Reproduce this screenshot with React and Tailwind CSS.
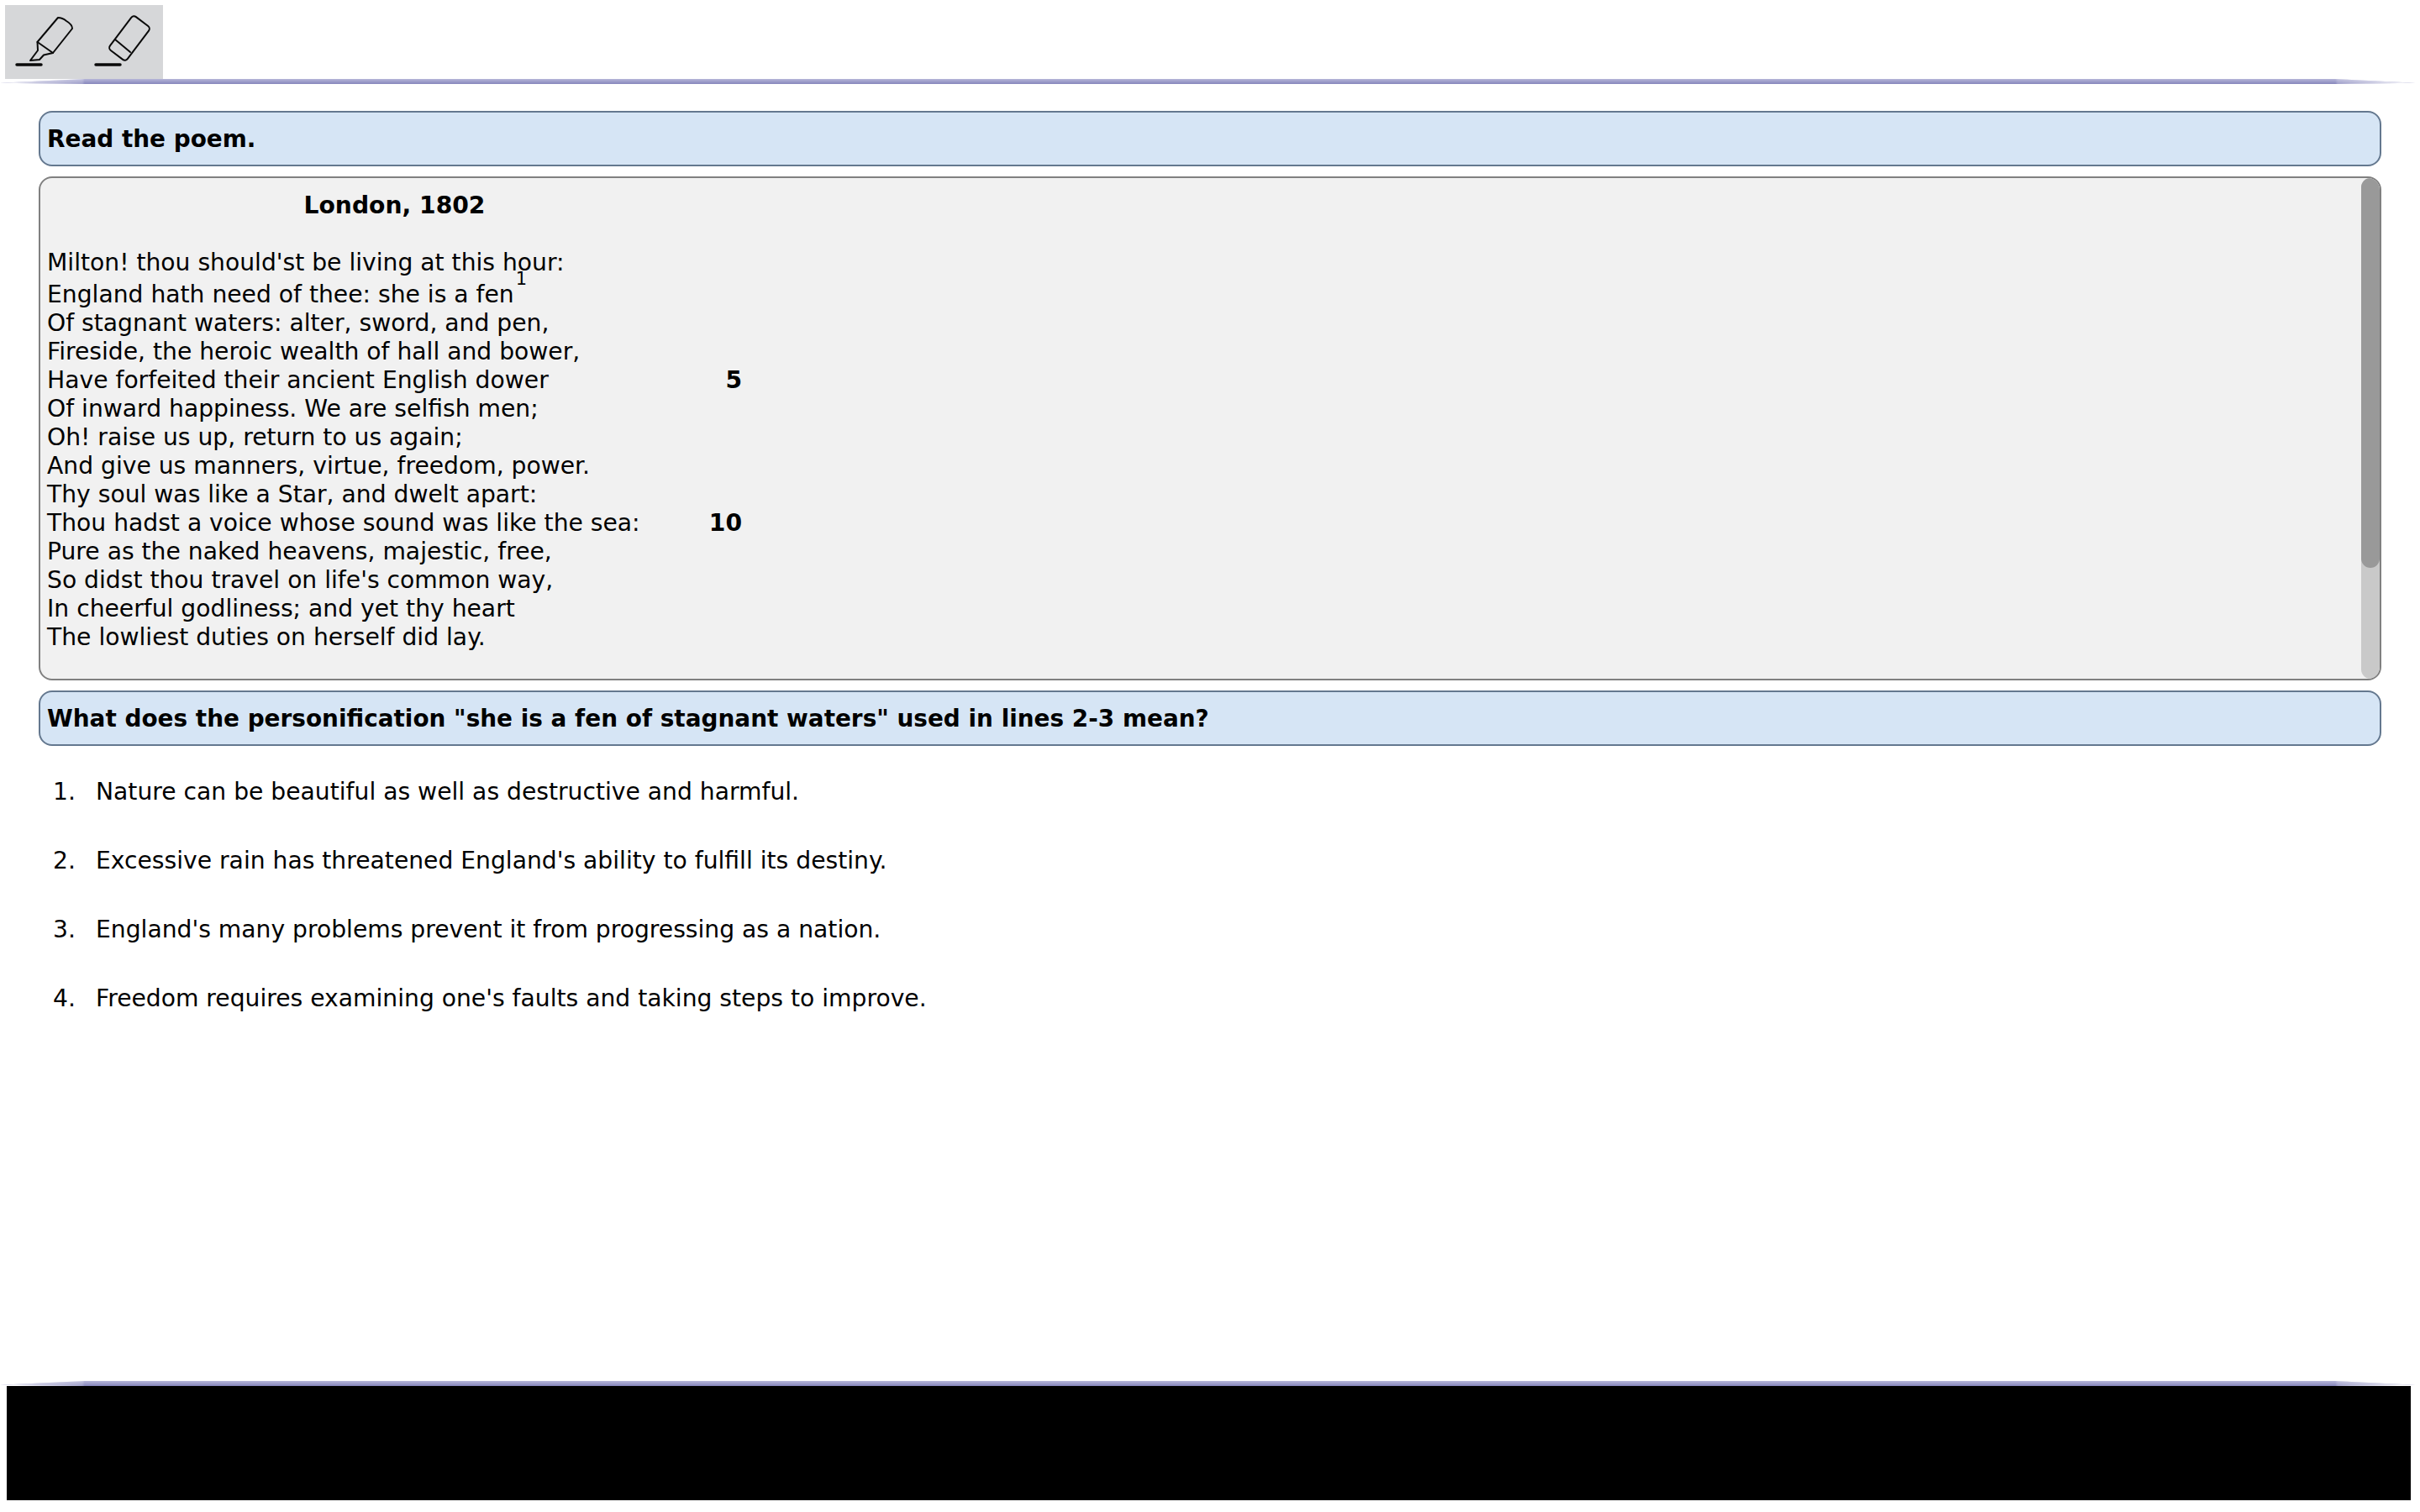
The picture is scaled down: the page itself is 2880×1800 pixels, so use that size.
import React from 'react';

const poemLines = [
  { text: "Milton! thou should'st be living at this hour:" },
  { text: "England hath need of thee: she is a fen", note: "1" },
  { text: "Of stagnant waters: alter, sword, and pen," },
  { text: "Fireside, the heroic wealth of hall and bower," },
  { text: "Have forfeited their ancient English dower", num: "5" },
  { text: "Of inward happiness. We are selfish men;" },
  { text: "Oh! raise us up, return to us again;" },
  { text: "And give us manners, virtue, freedom, power." },
  { text: "Thy soul was like a Star, and dwelt apart:" },
  { text: "Thou hadst a voice whose sound was like the sea:", num: "10" },
  { text: "Pure as the naked heavens, majestic, free," },
  { text: "So didst thou travel on life's common way," },
  { text: "In cheerful godliness; and yet thy heart" },
  { text: "The lowliest duties on herself did lay." },
];

const answers = [
  "Nature can be beautiful as well as destructive and harmful.",
  "Excessive rain has threatened England's ability to fulfill its destiny.",
  "England's many problems prevent it from progressing as a nation.",
  "Freedom requires examining one's faults and taking steps to improve.",
];

function HighlightIcon() {
  return (
    <svg viewBox="0 0 94 88" className="w-[94px] h-[88px]" fill="none" stroke="#0a0a0a" strokeWidth="2" strokeLinejoin="round" strokeLinecap="round">
      <path d="M38.5 44 L63 15 Q68 15 73 19 Q80 23 80 28 L57 57 Z" />
      <path d="M38.5 44 L39 54 L30 66 L41 65 L46 59.5 L57 57" />
      <path d="M14 71 H43" strokeWidth="3.5" />
    </svg>
  );
}

function EraserIcon() {
  return (
    <svg viewBox="0 0 94 88" className="w-[94px] h-[88px]" fill="none" stroke="#0a0a0a" strokeWidth="2" strokeLinejoin="round" strokeLinecap="round">
      <rect x="-13" y="-25" width="26" height="50" rx="4" transform="translate(54 39.5) rotate(37)" />
      <path d="M37 41 L55 56" />
      <path d="M14 71 H43" strokeWidth="3.5" />
    </svg>
  );
}

function Divider() {
  return (
    <div className="w-full h-[6px] bg-[linear-gradient(to_right,#ffffff_0.2%,#ffffff80_1.5%,#ffffff30_3.4%,transparent_3.5%,transparent_96.5%,#ffffff30_96.6%,#ffffff80_98%,#ffffff_99.8%),linear-gradient(to_bottom,#b6b6d8,#8686bc)] [clip-path:polygon(0_80%,3.5%_0,96.5%_0,99.8%_80%,96.5%_100%,3.5%_100%)]" />
  );
}

function App() {
  return (
    <div className="w-[2880px] h-[1800px] bg-white flex flex-col text-black text-[28.2px] leading-[34px] font-['DejaVu_Sans','Liberation_Sans',sans-serif]">
      {/* Toolbar */}
      <div className="pt-[6px] pl-[6px]">
        <div className="w-[188px] h-[88px] bg-[#d6d7d9] flex">
          <HighlightIcon />
          <EraserIcon />
        </div>
      </div>
      <Divider />

      {/* Content */}
      <div className="flex-1 pt-[32px] px-[46px] flex flex-col gap-[12px]">
        <div className="h-[66px] w-[2788px] border-2 border-[#64788f] rounded-[16px] bg-[#d6e5f5] flex items-center pl-[8px] pt-[2px] font-bold text-[27.9px]">
          Read the poem.
        </div>

        {/* Poem panel */}
        <div className="h-[600px] w-[2788px] border-2 border-[#808080] rounded-[16px] bg-[#f1f1f1] flex overflow-hidden">
          <div className="flex-1 pl-[8px] pt-[16px]">
            <div className="w-[827px]">
              <div className="text-center font-bold mb-[34px]">London, 1802</div>
              {poemLines.map((line, index) => (
                <div key={index} className={`flex justify-between ${line.note ? "h-[38px] items-end" : "h-[34px]"}`}>
                  <span>
                    {line.text}
                    {line.note && <sup className="text-[21px] top-[-1em] ml-[2px]">{line.note}</sup>}
                  </span>
                  {line.num && <span className="font-bold">{line.num}</span>}
                </div>
              ))}
            </div>
          </div>
          <div className="w-[22px] bg-[#c9c9c9] rounded-[12px]">
            <div className="h-[464px] bg-[#999999] rounded-[12px]" />
          </div>
        </div>

        <div className="h-[66px] w-[2788px] border-2 border-[#64788f] rounded-[16px] bg-[#d6e5f5] flex items-center pl-[8px] pt-[2px] font-bold text-[27.9px]">
          What does the personification "she is a fen of stagnant waters" used in lines 2-3 mean?
        </div>

        {/* Answers */}
        <div className="flex flex-col gap-[48px] pt-[26px]">
          {answers.map((answer, index) => (
            <div key={index} className="flex">
              <span className="w-[44px] text-right">{index + 1}.</span>
              <span className="ml-[24px]">{answer}</span>
            </div>
          ))}
        </div>
      </div>

      {/* Footer */}
      <Divider />
      <div className="pl-[8px] pr-[11px] pb-[14px]">
        <div className="h-[136px] bg-black" />
      </div>
    </div>
  );
}

export default App;
